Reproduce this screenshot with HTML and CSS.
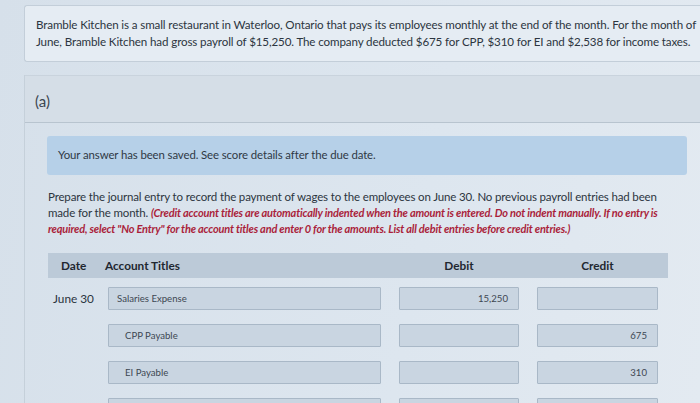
FILE: index.html
```html
<!DOCTYPE html>
<html>
<head>
<meta charset="utf-8">
<link rel="stylesheet" href="styles.css">
</head>
<body>
<div class="page">
  <div class="intro">
    <p>Bramble Kitchen is a small restaurant in Waterloo, Ontario that pays its employees monthly at the end of the month. For the month of June, Bramble Kitchen had gross payroll of $15,250. The company deducted $675 for CPP, $310 for EI and $2,538 for income taxes.</p>
  </div>
  <div class="section">
    <div class="section-head">(a)</div>
    <div class="section-body">
      <div class="alert">Your answer has been saved. See score details after the due date.</div>
      <p class="prompt">Prepare the journal entry to record the payment of wages to the employees on June 30. No previous payroll entries had been made for the month. <em class="note">(Credit account titles are automatically indented when the amount is entered. Do not indent manually. If no entry is required, select "No Entry" for the account titles and enter 0 for the amounts. List all debit entries before credit entries.)</em></p>
      <div class="journal">
        <div class="jhead">
          <div class="h-date">Date</div>
          <div class="h-acct">Account Titles</div>
          <div class="h-num">Debit</div>
          <div class="h-num">Credit</div>
        </div>
        <div class="jrow">
          <div class="date">June 30</div>
          <div class="field">Salaries Expense</div>
          <div class="field num">15,250</div>
          <div class="field num"></div>
        </div>
        <div class="jrow">
          <div class="date"></div>
          <div class="field indent">CPP Payable</div>
          <div class="field num"></div>
          <div class="field num">675</div>
        </div>
        <div class="jrow">
          <div class="date"></div>
          <div class="field indent">EI Payable</div>
          <div class="field num"></div>
          <div class="field num">310</div>
        </div>
        <div class="jrow">
          <div class="date"></div>
          <div class="field indent"></div>
          <div class="field num"></div>
          <div class="field num"></div>
        </div>
      </div>
    </div>
  </div>
</div>
</body>
</html>
```

FILE: styles.css
```css
html, body {
  margin: 0;
  padding: 0;
}
body {
  width: 700px;
  height: 403px;
  overflow: hidden;
  background: linear-gradient(100deg, #d6e0ea 0%, #dde6ef 60%, #e3eaf1 100%);
  font-family: Lato, "Open Sans", sans-serif;
  color: #2c3540;
}
.page {
  box-sizing: border-box;
  padding: 5px 0 0 24px;
  width: 712px;
}
.intro {
  box-sizing: border-box;
  height: 57px;
  background: #e5ecf3;
  border: 1px solid #c3ced9;
  border-right: none;
  border-radius: 3px 0 0 3px;
  padding: 10px 0 0 11px;
}
.intro p {
  margin: 0;
  width: 670px;
  font-size: 11.6px;
  line-height: 17px;
  letter-spacing: -0.12px;
}
.section {
  margin-top: 13px;
  border-left: 1px solid #c5d0da;
}
.section-head {
  height: 48px;
  box-sizing: border-box;
  background: #d5dee7;
  border-top: 1px solid #c9d3dd;
  border-bottom: 1px solid #b8c4cf;
  padding: 16px 0 0 10px;
  font-size: 15px;
  color: #3c4650;
}
.section-body {
  padding: 13px 0 0 22px;
}
.alert {
  box-sizing: border-box;
  width: 640px;
  height: 39px;
  background: #b6d0e8;
  border-radius: 3px;
  padding: 12px 0 0 11px;
  font-size: 11.4px;
  color: #2f3945;
  letter-spacing: -0.1px;
}
.prompt {
  margin: 14px 0 0 1px;
  width: 632px;
  font-size: 11.5px;
  line-height: 16px;
  letter-spacing: -0.15px;
}
.note {
  color: #aa1f3b;
  font-weight: bold;
  font-size: 11px;
  letter-spacing: -0.2px;
  line-height: 16px;
}
.journal {
  margin: 16px 0 0 1px;
  width: 620px;
}
.jhead, .jrow {
  display: grid;
  grid-template-columns: 42px 273px 120px 121px;
  column-gap: 18px;
  align-items: center;
}
.jhead {
  height: 25px;
  background: #bccad8;
  font-weight: bold;
  font-size: 11.8px;
  color: #1f2730;
}
.h-date {
  padding-left: 13px;
}
.h-acct {
  margin-left: -3px;
}
.h-num {
  text-align: center;
}
.jrow {
  margin-top: 9px;
}
.jrow + .jrow {
  margin-top: 14px;
}
.date {
  padding-left: 5px;
  font-size: 11.8px;
  color: #2a333d;
  white-space: nowrap;
}
.field {
  box-sizing: border-box;
  height: 23px;
  line-height: 21px;
  background: #c9d5e1;
  border: 1px solid #a9b8c7;
  border-radius: 1px;
  padding: 0 8px;
  font-size: 9.6px;
  color: #3d4752;
}
.field.indent {
  padding-left: 16px;
}
.field.num {
  text-align: right;
  padding-right: 10px;
}
```
